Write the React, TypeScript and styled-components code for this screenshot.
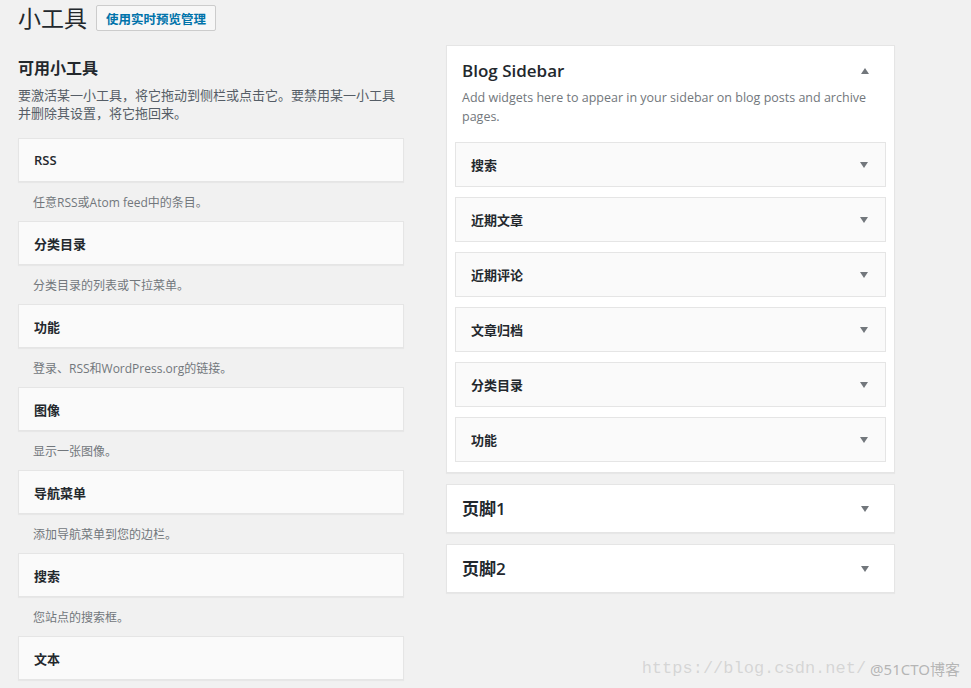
import React from "react";
import styled, { createGlobalStyle } from "styled-components";

const GlobalStyle = createGlobalStyle`
  html, body {
    margin: 0;
    padding: 0;
    background: #f1f1f1;
  }
  body {
    font-family: "Open Sans", "Noto Sans CJK SC", sans-serif;
    color: #23282d;
  }
`;

const Page = styled.div`
  position: relative;
  min-height: 688px;
  padding: 0 18px;
  box-sizing: border-box;
  overflow: hidden;
`;

const Header = styled.div`
  display: flex;
  align-items: center;
  gap: 9px;
  height: 36px;
  margin-bottom: 9px;
`;

const PageTitle = styled.h1`
  margin: 0;
  font-size: 23px;
  font-weight: 400;
  line-height: 29px;
  color: #23282d;
`;

const ActionButton = styled.a`
  display: inline-flex;
  align-items: center;
  height: 24px;
  padding: 0 9px;
  border: 1px solid #ccc;
  border-radius: 2px;
  background: #f7f7f7;
  color: #0073aa;
  font-size: 12.5px;
  font-weight: 700;
  text-decoration: none;
`;

const Columns = styled.div`
  display: grid;
  grid-template-columns: 386px 449px;
  column-gap: 42px;
  align-items: start;
`;

const LeftCol = styled.div`
  padding-top: 13px;
`;

const SectionTitle = styled.h2`
  margin: 0 0 8px;
  font-size: 16px;
  font-weight: 700;
  line-height: 20px;
`;

const Intro = styled.p`
  margin: 0 0 16px;
  font-size: 13px;
  line-height: 18px;
  color: #555d66;
`;

const WidgetCard = styled.div`
  display: flex;
  align-items: center;
  justify-content: space-between;
  height: 44px;
  box-sizing: border-box;
  padding: 0 15px;
  background: #fafafa;
  border: 1px solid #e5e5e5;
  box-shadow: 0 1px 1px rgba(0, 0, 0, 0.04);
  font-size: 13px;
  font-weight: 600;
  color: #23282d;
`;

const WidgetDesc = styled.div`
  padding: 12px 15px 9px;
  font-size: 12px;
  line-height: 18px;
  color: #72777c;
`;

const RightCol = styled.div`
  display: flex;
  flex-direction: column;
  gap: 11px;
`;

const SidebarBox = styled.div`
  background: #fff;
  border: 1px solid #e5e5e5;
  box-shadow: 0 1px 1px rgba(0, 0, 0, 0.04);
`;

const SidebarHead = styled.div<{ $open?: boolean }>`
  display: flex;
  align-items: center;
  justify-content: space-between;
  padding: ${(p) => (p.$open ? "13px 25px 0 15px" : "0 25px 0 15px")};
  height: ${(p) => (p.$open ? "auto" : "47px")};
`;

const SidebarTitle = styled.h3`
  margin: 0;
  font-size: 17px;
  font-weight: 600;
  line-height: 24px;
  color: #23282d;
`;

const SidebarDesc = styled.p`
  margin: 5px 15px 16px;
  font-size: 12.5px;
  line-height: 19px;
  color: #72777c;
`;

const SidebarList = styled.div`
  display: flex;
  flex-direction: column;
  gap: 10px;
  padding: 0 8px 10px;
`;

const InnerWidget = styled(WidgetCard)`
  height: 45px;
  padding-right: 17px;
  box-shadow: none;
`;

const Arrow = styled.span<{ $up?: boolean }>`
  width: 0;
  height: 0;
  border-left: 4.5px solid transparent;
  border-right: 4.5px solid transparent;
  ${(p) =>
    p.$up
      ? "border-bottom: 6px solid #72777c;"
      : "border-top: 6px solid #72777c;"}
`;

const Watermark = styled.div`
  position: absolute;
  right: 11px;
  bottom: 9px;
  display: flex;
  align-items: center;
  gap: 4px;
  pointer-events: none;
`;

const WatermarkUrl = styled.span`
  font-family: "Liberation Mono", monospace;
  font-size: 17px;
  color: rgba(160, 160, 160, 0.35);
`;

const WatermarkBrand = styled.span`
  font-family: "Noto Sans", "Noto Sans CJK SC", sans-serif;
  font-size: 15px;
  color: rgba(140, 140, 140, 0.6);
`;

const available = [
  { name: "RSS", desc: "任意RSS或Atom feed中的条目。" },
  { name: "分类目录", desc: "分类目录的列表或下拉菜单。" },
  { name: "功能", desc: "登录、RSS和WordPress.org的链接。" },
  { name: "图像", desc: "显示一张图像。" },
  { name: "导航菜单", desc: "添加导航菜单到您的边栏。" },
  { name: "搜索", desc: "您站点的搜索框。" },
  { name: "文本", desc: "" },
];

const sidebarWidgets = ["搜索", "近期文章", "近期评论", "文章归档", "分类目录", "功能"];

export default function App() {
  return (
    <>
      <GlobalStyle />
      <Page>
        <Header>
          <PageTitle>小工具</PageTitle>
          <ActionButton>使用实时预览管理</ActionButton>
        </Header>
        <Columns>
          <LeftCol>
            <SectionTitle>可用小工具</SectionTitle>
            <Intro>
              要激活某一小工具，将它拖动到侧栏或点击它。要禁用某一小工具
              <br />
              并删除其设置，将它拖回来。
            </Intro>
            {available.map((w) => (
              <div key={w.name}>
                <WidgetCard>{w.name}</WidgetCard>
                {w.desc && <WidgetDesc>{w.desc}</WidgetDesc>}
              </div>
            ))}
          </LeftCol>
          <RightCol>
            <SidebarBox>
              <SidebarHead $open>
                <SidebarTitle>Blog Sidebar</SidebarTitle>
                <Arrow $up />
              </SidebarHead>
              <SidebarDesc>
                Add widgets here to appear in your sidebar on blog posts and archive pages.
              </SidebarDesc>
              <SidebarList>
                {sidebarWidgets.map((name) => (
                  <InnerWidget key={name}>
                    {name}
                    <Arrow />
                  </InnerWidget>
                ))}
              </SidebarList>
            </SidebarBox>
            <SidebarBox>
              <SidebarHead>
                <SidebarTitle>页脚1</SidebarTitle>
                <Arrow />
              </SidebarHead>
            </SidebarBox>
            <SidebarBox>
              <SidebarHead>
                <SidebarTitle>页脚2</SidebarTitle>
                <Arrow />
              </SidebarHead>
            </SidebarBox>
          </RightCol>
        </Columns>
        <Watermark>
          <WatermarkUrl>https://blog.csdn.net/</WatermarkUrl>
          <WatermarkBrand>@51CTO博客</WatermarkBrand>
        </Watermark>
      </Page>
    </>
  );
}
